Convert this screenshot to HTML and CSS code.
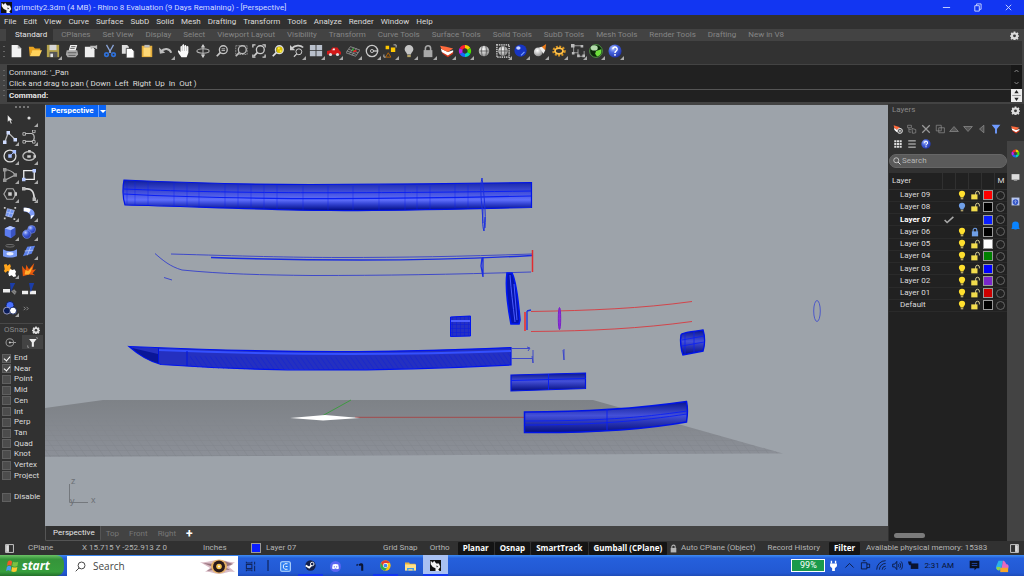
FILE: index.html
```html
<!DOCTYPE html>
<html lang="en">
<head>
	<meta charset="utf-8">
	<title>grimcity2.3dm (4 MB) - Rhino 8 Evaluation</title>
	<link rel="stylesheet" href="styles.css">
</head>
<body>
	<!-- shared icons -->
	<svg class="defs" width="0" height="0" aria-hidden="true">
		<defs>
			<radialGradient id="g-blue" cx=".35" cy=".3" r=".8"><stop offset="0" stop-color="#b9c8ff"/><stop offset=".4" stop-color="#4664e0"/><stop offset="1" stop-color="#1c2c9c"/></radialGradient>
			<radialGradient id="g-white" cx=".4" cy=".35" r=".7"><stop offset="0" stop-color="#fff"/><stop offset="1" stop-color="#8d8d8d"/></radialGradient>
			<symbol id="gear" viewBox="0 0 16 16"><path d="M6.500 1h3l.4 2 1.400.6 1.800-1.200 2 2-1.100 1.800.6 1.400 2 .4v2l-2 .4-.6 1.400 1.100 1.800-2 2-1.800-1.200-1.400.6-.4 1.600h-3l-.4-1.600-1.400-.6-1.800 1.200-2-2 1.100-1.800-.6-1.400-1.600-.4V8l1.600-.4.6-1.400L1.300 4.400l2-2 1.800 1.200L6.100 3z" fill="#dcdcdc"/><circle cx="8" cy="8.600" r="2.600" fill="#3a3a3a"/></symbol>
			<symbol id="bulb" viewBox="0 0 16 16"><path d="M8 1a5 5 0 0 0-5 5c0 2.500 2.500 3.500 2.800 6h4.400c.3-2.500 2.800-3.500 2.800-6a5 5 0 0 0-5-5z"/><path d="M6 12.500h4v2.500H6z" fill="#b5a468"/></symbol>
			<symbol id="unlock" viewBox="0 0 16 16"><path d="M9 8V5a3 3 0 0 1 6 0v2" fill="none" stroke="#d8cf96" stroke-width="1.600"/><rect x="2" y="7" width="10" height="8" fill="#f2dc4c"/></symbol>
			<symbol id="lock" viewBox="0 0 16 16"><path d="M5 8V5a3 3 0 0 1 6 0v3" fill="none" stroke="currentColor" stroke-width="1.800"/><rect x="3" y="7" width="10" height="8" fill="currentColor"/></symbol>
			<symbol id="wheel" viewBox="0 0 16 16"><g fill="none" stroke-width="4"><path d="M8 3a5 5 0 0 1 4.300 2.500" stroke="#f7d000"/><path d="M12.300 5.500a5 5 0 0 1 0 5" stroke="#4be000"/><path d="M12.300 10.500A5 5 0 0 1 8 13" stroke="#00d8c0"/><path d="M8 13a5 5 0 0 1-4.300-2.500" stroke="#1668ff"/><path d="M3.700 10.500a5 5 0 0 1 0-5" stroke="#c020f0"/><path d="M3.700 5.500A5 5 0 0 1 8 3" stroke="#ff2030"/></g></symbol>
			<symbol id="layers" viewBox="0 0 16 16"><path d="M2 8l7 4 6-4v3l-6 4-6-4z" fill="#d0351a"/><path d="M1 5l8 4 6-2v2l-6 4-7-4z" fill="#fff"/><path d="M0 2l7 1 8 2-6 4-7-3z" fill="#ff6a3c"/></symbol>
			<symbol id="help" viewBox="0 0 16 16"><circle cx="8" cy="8" r="7.500" fill="url(#g-blue)"/><path d="M5.500 6a2.500 2.500 0 1 1 3.700 2.200C8.200 8.800 8 9.200 8 10.300M8 11.500v1.800" fill="none" stroke="#fff" stroke-width="1.700"/></symbol>
			<symbol id="lens" viewBox="0 0 16 16"><circle cx="9.500" cy="6.500" r="4.500" fill="none" stroke="currentColor" stroke-width="1.500"/><path d="M6.300 9.700L2 14" stroke="currentColor" stroke-width="2"/></symbol>
			<symbol id="rhino" viewBox="0 0 16 16"><rect width="16" height="16" fill="#111"/><path d="M1 1l3 3 2-3 3 4 4 0 2 5-3 4 2 2H8l0-4-4-2-3-4z" fill="#f4f4f4"/><path d="M9 8l3 1-2 2z" fill="#333"/></symbol>
			<symbol id="pane" viewBox="0 0 16 16"><path d="M1 1h14v14H1z" fill="none" stroke="#ddd" stroke-width="1.500"/></symbol>
		</defs>
	</svg>

	<header class="titlebar">
		<svg class="app-icon"><use href="#rhino"/></svg>
		<span class="title">grimcity2.3dm (4 MB) - Rhino 8 Evaluation (9 Days Remaining) - [Perspective]</span>
		<div class="window-buttons">
			<button aria-label="Minimize"><svg viewBox="0 0 10 10"><path d="M1 5h8"/></svg></button>
			<button aria-label="Restore"><svg viewBox="0 0 10 10"><path d="M2 3h5v6H2zM4 3V1h5v6H7"/></svg></button>
			<button aria-label="Close"><svg viewBox="0 0 10 10"><path d="M2 2l6 6M8 2L2 8"/></svg></button>
		</div>
	</header>

	<nav class="menubar">
		<button>File</button><button>Edit</button><button>View</button><button>Curve</button><button>Surface</button><button>SubD</button><button>Solid</button><button>Mesh</button><button>Drafting</button><button>Transform</button><button>Tools</button><button>Analyze</button><button>Render</button><button>Window</button><button>Help</button>
	</nav>

	<div class="tool-tabs">
		<button class="active">Standard</button><button>CPlanes</button><button>Set View</button><button>Display</button><button>Select</button><button>Viewport Layout</button><button>Visibility</button><button>Transform</button><button>Curve Tools</button><button>Surface Tools</button><button>Solid Tools</button><button>SubD Tools</button><button>Mesh Tools</button><button>Render Tools</button><button>Drafting</button><button>New in V8</button>
		<button class="gear" aria-label="Options"><svg><use href="#gear"/></svg></button>
	</div>

	<div class="toolbar">
		<div class="grip"></div>
		<div class="tools">
			<button aria-label="New"><svg viewBox="0 0 16 16"><path d="M3 1h7l4 4v10H3z" fill="#f2f2f2"/><path d="M10 1v4h4z" fill="#aaa"/></svg></button>
			<button aria-label="Open"><svg viewBox="0 0 16 16"><path d="M1 3h5l2 2h6v3H5l-3 6z" fill="#e9a320"/><path d="M5 7h11l-3 7H2z" fill="#ffd35c"/></svg></button>
			<button class="more" aria-label="Save"><svg viewBox="0 0 16 16"><path d="M1 1h14v14H1z" fill="#b3a24c"/><path d="M4 1h8v6H4z" fill="#d6d6d6"/><path d="M4 9h9v6H4z" fill="#555"/><path d="M5 11h3v4H5z" fill="#e5e5e5"/></svg></button>
			<button aria-label="Print"><svg viewBox="0 0 16 16"><path d="M6 1h8l-2 7H4z" fill="#eee"/><path d="M2 7h12l1 5-3 3H3l-2-3z" fill="#a9a9a9"/><path d="M7 3h5M6 5h5M3 10h10M4 13h8" stroke="#555"/></svg></button>
			<button aria-label="Properties"><svg viewBox="0 0 16 16"><path d="M1 3h9l2 3v9H1z" fill="#eee"/><path d="M7 2h6l2-1v5l-4-2-3 2z" fill="#bbb"/></svg></button>
			<button aria-label="Cut"><svg viewBox="0 0 16 16"><path d="M4 1l5 9M12 1L7 10" stroke="#8ba5d8" stroke-width="1.500"/><g fill="none" stroke="#2e6fd6" stroke-width="2"><circle cx="4" cy="12" r="2"/><circle cx="12" cy="12" r="2"/></g></svg></button>
			<button aria-label="Copy"><svg viewBox="0 0 16 16"><path d="M1 1h6l2 2v8H1z" fill="#ddd"/><path d="M6 5h6l3 3v8H6z" fill="#fff" stroke="#444"/></svg></button>
			<button aria-label="Paste"><svg viewBox="0 0 16 16"><path d="M2 2h12v13H2z" fill="#e4ad3c"/><path d="M4 4h8v10H4z" fill="#ffd977"/><path d="M5 1h6v3H5z" fill="#bbb"/></svg></button>
			<button class="more" aria-label="Undo"><svg viewBox="0 0 16 16"><path d="M2 9c4-5 10-4 12 1" fill="none" stroke="#bdbdbd" stroke-width="2.200"/><path d="M0 4l1 7 6-1z" fill="#bdbdbd"/></svg></button>
			<button aria-label="Pan"><svg viewBox="0 0 16 16"><path d="M5 15C3 12 1 10 1 8l1-1 2 2V3l1-1 1 1V1l2-1v3l1-2h1l1 2 1-1 1 1v7l-2 5z" fill="#fafafa"/><path d="M6 3v5M8.500 3v5M11 3v5" stroke="#999" stroke-width=".6"/></svg></button>
			<button aria-label="Rotate view"><svg viewBox="0 0 16 16"><g fill="none" stroke="#b5b5b5" stroke-width="1.200"><ellipse cx="8" cy="8" rx="7" ry="2.500"/><path d="M8 1v14"/></g><path d="M8 0l2.500 4h-5zM8 16l2.500-4h-5z" fill="#ccc"/></svg></button>
			<button aria-label="Zoom"><svg viewBox="0 0 16 16" color="#c5c5c5"><use href="#lens"/><path d="M7.500 5.500h4M7.500 7.500h4" stroke="#ccc"/></svg></button>
			<button aria-label="Zoom window"><svg viewBox="0 0 16 16" color="#bbb"><path d="M2 2h13v10H2z" fill="none" stroke="#999" stroke-dasharray="2 1"/><use href="#lens"/></svg></button>
			<button aria-label="Zoom extents"><svg viewBox="0 0 16 16" color="#ccc"><use href="#lens"/><path d="M1 4V1h3M12 1h3v3M15 12v3h-3M1 12v3h3" fill="none" stroke="#ccc" stroke-width="1.500"/></svg></button>
			<button aria-label="Zoom selected"><svg viewBox="0 0 16 16" color="#ddd"><circle cx="10" cy="6.500" r="4" fill="#d8c000"/><path d="M8 4h2v2H8zM10 7h2v2h-2z" fill="#fff04a"/><use href="#lens"/></svg></button>
			<button class="more" aria-label="Undo view"><svg viewBox="0 0 16 16" color="#ccc"><g transform="translate(3 4) scale(.75)"><use href="#lens" width="16" height="16"/></g><path d="M2 5c4-4 10-4 13-1" fill="none" stroke="#ccc" stroke-width="2"/><path d="M0 1v6h6z" fill="#ccc"/></svg></button>
			<button class="more" aria-label="Four viewports"><svg viewBox="0 0 16 16"><path d="M1 1h6.500v6H1zM8.500 1H15v6H8.500zM1 8h6.500v6H1zM8.500 8H15v6H8.500z" fill="#b9c0cc"/></svg></button>
			<button class="more" aria-label="Right view"><svg viewBox="0 0 16 16"><path d="M0 8l4-1 2-3h6l2 3 2 2v3H0z" fill="#d31818"/><path d="M6 7l1-2h2v2z" fill="#eee"/><circle cx="4" cy="12" r="1.800" fill="#ddd"/><circle cx="12" cy="12" r="1.800" fill="#ddd"/></svg></button>
			<button class="more" aria-label="CPlane"><svg viewBox="0 0 16 16"><g fill="none" stroke="#999" stroke-width=".9"><path d="M5 3l11 4-5 7-11-4zM9 4L4 11M12 5l-5 8M3 6l11 4M1 8l11 4"/></g><path d="M8 8h4" stroke="#e02020" stroke-width="2"/><path d="M8 8V5" stroke="#20b020" stroke-width="1.500"/></svg></button>
			<button class="more" aria-label="Object snap"><svg viewBox="0 0 16 16"><circle cx="8" cy="8" r="6.500" fill="none" stroke="#c9c9c9" stroke-width="1.500"/><circle cx="8" cy="8" r="1.800" fill="none" stroke="#ccc"/><path d="M9 8h6" stroke="#ccc" stroke-width="1.500"/></svg></button>
			<button class="more" aria-label="Select"><svg viewBox="0 0 16 16"><path d="M3 2h4v4H3zM9 4h5v5H9z" fill="#ffc800"/><path d="M6 10l3 5H3z" fill="none" stroke="#c06a00"/><path d="M12 1h3v3M1 12v3h2" fill="none" stroke="#ccc"/></svg></button>
			<button class="more" aria-label="Hide"><svg viewBox="0 0 16 16" fill="#c4c4c4"><use href="#bulb"/></svg></button>
			<button class="more" aria-label="Lock"><svg viewBox="0 0 16 16" color="#a9a9a9"><use href="#lock"/></svg></button>
			<button class="more" aria-label="Layers"><svg><use href="#layers"/></svg></button>
			<button class="more" aria-label="Object properties"><svg><use href="#wheel"/></svg></button>
			<button aria-label="Shade"><svg viewBox="0 0 16 16"><circle cx="8" cy="8" r="6" fill="url(#g-white)"/><path d="M6 2.500c-1 3-1 8 0 11M3 8h10M10 2.500c1 3 1 8 0 11" fill="none" stroke="#444" stroke-width=".8"/></svg></button>
			<button class="more" aria-label="Render preview"><svg viewBox="0 0 16 16"><path d="M1 1h14v14H1z" fill="none" stroke="#bbb" stroke-width="2" stroke-dasharray="1.500 1"/><circle cx="8" cy="8" r="5.500" fill="url(#g-white)"/><path d="M6 3v10M10 3v10M3 8h10" stroke="#444" stroke-width=".8"/></svg></button>
			<button class="more" aria-label="Render"><svg viewBox="0 0 16 16"><circle cx="7.500" cy="7.500" r="7" fill="#1735c4"/><ellipse cx="5" cy="4.500" rx="2.500" ry="2" fill="#c5d2ff"/><path d="M8 13l4-4" stroke="#79a0ff" stroke-width="1.500"/></svg></button>
			<button class="more" aria-label="Lights"><svg viewBox="0 0 16 16"><circle cx="6" cy="9" r="5" fill="url(#g-white)"/><path d="M9 4l6-4-1 7z" fill="#ef7d1a"/><path d="M7 4l3-1 4 4-2 4z" fill="#eee"/></svg></button>
			<button class="more" aria-label="Options"><svg viewBox="0 0 16 16"><ellipse cx="8" cy="8" rx="6" ry="4.500" fill="none" stroke="#d89522" stroke-width="3.500" stroke-dasharray="2 1.500"/><ellipse cx="8" cy="8" rx="4.500" ry="3.200" fill="none" stroke="#ffc14a" stroke-width="2"/></svg></button>
			<button class="more" aria-label="Dimension"><svg viewBox="0 0 16 16"><path d="M3 2h9M3 2v8h5M8 6v8h7V8" fill="none" stroke="#aaa"/><path d="M0 0h4v4H0zM11 1h3v3h-3zM1 9h3v3H1zM7 12h3v3H7zM13 12h3v3h-3z" fill="#bbb"/></svg></button>
			<button class="more" aria-label="Grasshopper"><svg viewBox="0 0 16 16"><circle cx="8" cy="8" r="7.300" fill="#0c2a0a" stroke="#58a04c"/><ellipse cx="6" cy="4.500" rx="4" ry="3" fill="#b5dcae"/><path d="M8 8l6-2c1 5-2 8-5 8l-2-3z" fill="#6fe03c"/></svg></button>
			<button class="more" aria-label="Help"><svg><use href="#help"/></svg></button>
		</div>
	</div>

	<div class="command">
		<div class="grip"></div>
		<div class="command-text">
			<div class="history">
				<p>Successfully read file "C:\Users\Pistol\Downloads\grimcity2.3dm"</p>
				<p>Command: '_Pan</p>
				<p>Click and drag to pan ( Down&nbsp; Left&nbsp; Right&nbsp; Up&nbsp; In&nbsp; Out )</p>
			</div>
			<div class="prompt">
				<label for="command">Command:</label>
				<input type="text" id="command">
			</div>
		</div>
		<div class="command-scroll">
			<div class="scroll-arrows"><svg viewBox="0 0 10 24"><path d="M3 7l2-2 2 2M3 17l2 2 2-2"/></svg></div>
			<div class="spinner"><svg viewBox="0 0 10 12"><path d="M5 1l2 3H3zM5 11l2-3H3z"/><path class="split" d="M1 6h8"/></svg></div>
		</div>
	</div>

	<main class="workspace">
		<aside class="left">
			<div class="left-grip"></div>
			<div class="palette">
				<button aria-label="Select"><svg viewBox="0 0 16 16"><path d="M5 4v9l2-2 2 4 1.500-1-1.500-3h2.500z" fill="#eee" stroke="#111" stroke-width=".6"/></svg></button>
				<button class="more" aria-label="Point"><svg viewBox="0 0 16 16"><circle cx="8" cy="8" r="1.800" fill="#ddd"/></svg></button>
				<button class="more" aria-label="Polyline"><svg viewBox="0 0 16 16"><path d="M2 14L6 3l9 9" fill="none" stroke="#bbb" stroke-width="1.500"/><path d="M0 12h4v4H0zM4 1h4v4H4zM12 9h4v4h-4z" fill="#cfdcff"/></svg></button>
				<button class="more" aria-label="Curve"><svg viewBox="0 0 16 16"><path d="M2 4h9c4 1 4 8 0 9H2" fill="none" stroke="#bbb" stroke-width="1.300"/><g fill="#333" stroke="#bbb"><path d="M1 3h3v3H1zM12 0h3v3h-3zM1 12h3v3H1zM12 12h3v3h-3z"/></g></svg></button>
				<button class="more" aria-label="Circle"><svg viewBox="0 0 16 16"><circle cx="8" cy="8" r="6.800" fill="none" stroke="#ddd" stroke-width="1.500"/><path d="M7 9l6-6" stroke="#9bb4ff"/><path d="M6 6h4v4H6zM11 1h4v4h-4z" fill="#a9c0ff"/></svg></button>
				<button class="more" aria-label="Ellipse"><svg viewBox="0 0 16 16"><ellipse cx="8" cy="8" rx="7" ry="5" fill="none" stroke="#bbb" stroke-width="1.500"/><path d="M6 7h4v3H6zM7 1h3v3H7zM13 7h3v3h-3z" fill="#ccc"/></svg></button>
				<button class="more" aria-label="Arc"><svg viewBox="0 0 16 16"><path d="M2 2c6 0 10 3 12 6L2 14z" fill="none" stroke="#aaa" stroke-width="1.300"/><path d="M0 0h4v4H0zM12 6h4v4h-4zM0 12h4v4H0z" fill="#999"/></svg></button>
				<button class="more" aria-label="Rectangle"><svg viewBox="0 0 16 16"><path d="M2 3h12v10H2z" fill="none" stroke="#eee" stroke-width="1.500"/><path d="M0 11h4v4H0zM12 1h4v4h-4z" fill="#b6c9ff"/></svg></button>
				<button class="more" aria-label="Polygon"><svg viewBox="0 0 16 16"><path d="M4.500 2h7L15 8l-3.500 6h-7L1 8z" fill="none" stroke="#aaa" stroke-width="1.300"/><path d="M6 6h4v4H6zM13 6h3v4h-3z" fill="#ccc"/></svg></button>
				<button class="more" aria-label="Fillet"><svg viewBox="0 0 16 16"><path d="M1 2h5c6 0 8 4 8 13" fill="none" stroke="#ddd" stroke-width="2"/><path d="M0 0h4v4H0zM12 12h4v4h-4z" fill="#bbb"/></svg></button>
				<button class="more" aria-label="Surface"><svg viewBox="0 0 16 16"><path d="M5 3l8 2-3 8-7-2z" fill="#6f93f0"/><path d="M5 3l8 2-3 8-7-2zM9 4L6 12M4 7l8 2" stroke="#c8d5ff" stroke-width=".7" fill="none"/><path d="M1 1h2v2H1zM13 1h2v2h-2zM1 13h2v2H1zM12 14h2v2h-2z" fill="#ccc"/></svg></button>
				<button class="more" aria-label="Revolve"><svg viewBox="0 0 16 16"><path d="M2 2c9-1 14 4 12 9l-4 4c1-5-2-8-8-9z" fill="#7f9cf8"/><path d="M2 2c3 0 6 0 8 2L8 8C6 6 4 6 2 6zM10 11l4-1-4 5z" fill="#fff"/></svg></button>
				<button class="more" aria-label="Box"><svg viewBox="0 0 16 16"><path d="M2 4l6-3 6 2v8l-5 4-7-3z" fill="#5c7cf0"/><path d="M2 4l6-3 6 2-5 3z" fill="#b3c5ff"/><path d="M9 6l5-3v8l-5 4z" fill="#3a54c4"/></svg></button>
				<button class="more" aria-label="Sphere"><svg viewBox="0 0 16 16"><circle cx="11" cy="5" r="4.500" fill="url(#g-blue)" stroke="#8fa8f8" stroke-width=".6"/><circle cx="5.500" cy="10.500" r="4.800" fill="url(#g-blue)" stroke="#8fa8f8" stroke-width=".6"/></svg></button>
				<button aria-label="Loft"><svg viewBox="0 0 16 16"><ellipse cx="8" cy="2" rx="5" ry="1.500" fill="none" stroke="#777"/><path d="M0 6c4 3 12 3 16 0v8c-4 2-12 2-16 0z" fill="#7799f5"/><ellipse cx="8" cy="11" rx="4" ry="2" fill="#e8edff"/></svg></button>
				<button class="more" aria-label="Mesh"><svg viewBox="0 0 16 16"><path d="M6 3l9-1-4 9-10 3z" fill="#5f83ea"/><path d="M10 3L6 13M3 8l10-1" stroke="#c6d3ff" stroke-width=".8"/></svg></button>
				<button class="more" aria-label="Join"><svg viewBox="0 0 16 16"><path d="M1 2l3-1 1 2 3-2 1 3-1 2 2 1-3 3-2-1-2 2-2-2 1-2z" fill="#ffa51e"/><path d="M8 7l3 1 2-1 2 3-1 2 1 3-3 1-2-2-3 1-1-3z" fill="#fff"/></svg></button>
				<button aria-label="Explode"><svg viewBox="0 0 16 16"><path d="M0 3l4 5 1-6 3 5 6-7-2 8 4-1-4 5 3 2-7-1-7 2z" fill="#e8590c"/><path d="M3 13l1-5 3 1 5-5-2 6-2 3z" fill="#ffb02e"/></svg></button>
				<button aria-label="Trim"><svg viewBox="0 0 16 16"><path d="M0 8h8v4H0z" fill="#eee"/><path d="M8 1h6l-5 10z" fill="#1b3da8"/><path d="M10 10l4 4M12 9l3 3" stroke="#888" stroke-width="2"/></svg></button>
				<button aria-label="Split"><svg viewBox="0 0 16 16"><path d="M0 10h7v4H0zM9 10h7v4H9z" fill="#eee"/><path d="M8 1h6l-4 11z" fill="#1b3da8"/></svg></button>
				<button class="more" aria-label="Boolean"><svg viewBox="0 0 16 16"><circle cx="8" cy="5" r="4.500" fill="#4a70ff" stroke="#0b1d5a"/><circle cx="4.500" cy="11" r="4" fill="#0b1d5a" stroke="#aac"/><circle cx="11.500" cy="11" r="4" fill="#fff" stroke="#0b1d5a"/></svg></button>
				<button class="expand" aria-label="More"><svg viewBox="0 0 16 16"><path d="M3 5l3 3-3 3M8 5l3 3-3 3" fill="none" stroke="#999" stroke-width="1.500"/></svg></button>
			</div>

			<section class="osnap">
				<h2>OSnap <svg><use href="#gear"/></svg></h2>
				<div class="osnap-tabs">
					<button aria-label="Snaps"><svg viewBox="0 0 16 16"><circle cx="7" cy="8" r="5.500" fill="none" stroke="#999" stroke-width="1.500"/><path d="M7 8h9" stroke="#999" stroke-width="1.500"/><circle cx="7" cy="8" r="1.500" fill="#ccc"/></svg></button>
					<button class="other" aria-label="Filter"><svg viewBox="0 0 16 16"><path d="M3 3h11l-4 5v6H7V8z" fill="#eee"/><path d="M1 12v3h2M13 1h2v2" fill="none" stroke="#aaa"/></svg></button>
				</div>
				<div class="snaps">
					<label><input type="checkbox" checked>End</label>
					<label><input type="checkbox" checked>Near</label>
					<label><input type="checkbox">Point</label>
					<label><input type="checkbox">Mid</label>
					<label><input type="checkbox">Cen</label>
					<label><input type="checkbox">Int</label>
					<label><input type="checkbox">Perp</label>
					<label><input type="checkbox">Tan</label>
					<label><input type="checkbox">Quad</label>
					<label><input type="checkbox">Knot</label>
					<label><input type="checkbox">Vertex</label>
					<label><input type="checkbox">Project</label>
				</div>
				<label class="disable"><input type="checkbox">Disable</label>
			</section>
		</aside>

		<section class="center">
			<div class="viewport">
				<svg class="scene" viewBox="45 105 843 421" preserveAspectRatio="xMidYMid slice">
					<defs>
						<linearGradient id="tube" x2="0" y2="1"><stop offset="0" stop-color="#0f1f9c"/><stop offset=".3" stop-color="#3643cc"/><stop offset=".65" stop-color="#5f6efa"/><stop offset=".78" stop-color="#3444d4"/><stop offset="1" stop-color="#000c80"/></linearGradient>
						<linearGradient id="handle" x2="0" y2="1"><stop offset="0" stop-color="#0a168c"/><stop offset=".45" stop-color="#4450d8"/><stop offset="1" stop-color="#050f80"/></linearGradient>
						<linearGradient id="ground" x2="0" y2="1"><stop offset="0" stop-color="#7e8287"/><stop offset="1" stop-color="#8c9098"/></linearGradient>
						<linearGradient id="near" x2="0" y2="1"><stop offset=".3" stop-color="#000"/><stop offset="1" stop-color="#fff"/></linearGradient>
						<mask id="fade"><rect x="45" y="400" width="740" height="58" fill="url(#near)"/></mask>
						<pattern id="grid" width="9" height="5" patternUnits="userSpaceOnUse" patternTransform="skewX(35)"><path d="M0 0h9M0 0v5" stroke="#73777d" fill="none" stroke-width=".8"/></pattern>
						<pattern id="hatch" width="5" height="5" patternUnits="userSpaceOnUse" patternTransform="skewX(35)"><path d="M0 0v5" stroke="#0014e8" stroke-width="1.200"/></pattern>
						<pattern id="mesh" width="4" height="4" patternUnits="userSpaceOnUse"><path d="M0 0h4M0 0v4" stroke="#0014e8" fill="none"/></pattern>
					</defs>

					<!-- construction plane -->
					<path d="M45 408L103 400H593L783 453.500 45 457z" fill="url(#ground)"/>
					<path d="M45 408L103 400H593L783 453.500 45 457z" fill="url(#grid)" mask="url(#fade)" opacity=".6"/>
					<path d="M323 415.500L351 400" stroke="#3f9a42" fill="none"/>
					<path d="M355 417.300H525" stroke="#a34a4c" fill="none"/>
					<path d="M290 418l35-3 35 3-37 2.500z" fill="#fff"/>

					<!-- scabbard -->
					<path d="M124 180C190 183 250 184.500 310 184.500S470 183.500 531.500 182.500V207.500C460 209 390 211 330 210.500S190 206.500 125 205C122.500 198 122.500 187 124 180z" fill="url(#tube)" stroke="#0014e8" stroke-width="1.200"/>
					<g fill="none" stroke="#0a20f4">
						<path d="M124 189C220 193 330 194 531 191"/>
						<path d="M124 194C220 199 360 200 531 196" stroke-width="1.200"/>
						<path d="M127 181v24M135 182v23M148 182v23M174 183v24M187 183v24M199 184v24M225 184v24M238 184v24M251 185v24M264 185v24M277 185v24M303 186v24M328 186v24M353 186v24M379 186v24M405 186v24M417 186v24M430 186v23M455 185v23M468 185v23" stroke-width=".7" opacity=".6"/>
						<path d="M482 178c-2 8-1 20 0 30l1 15M482 178c2 15 4 36 3 50M483 208c0 10-1 18 1 23l1-14" stroke="#1c30e0"/>
					</g>

					<!-- blade profile -->
					<g fill="none" stroke="#3440cc" stroke-width=".9">
						<path d="M155 253.500c8 7 15 13 27 16.500 40 4 80 5 130 5.500 70 0 140-1 219-3.500"/>
						<path d="M171 254c70 2 120 3.500 170 3.500 60 0 120-1 191-3.500"/>
						<path d="M211 257.500c60 2 100 2.500 150 2.500s110-1 171-4.500" stroke="#1c2ee0" stroke-width="1.300"/>
						<path d="M164 277.500l8 2.500"/>
						<path d="M482 258l-1 8 2 11V257" stroke="#1c2ee0" stroke-width="1.300"/>
					</g>
					<path d="M532.500 250v22" stroke="#e02c30" stroke-width="1.500"/>

					<!-- guard, collar -->
					<path d="M507 273h5c4 8 6 24 8 47l-1 4h-8c-3-16-6-36-4-51z" fill="#0714b0" stroke="#0018f4" stroke-width="1.600"/>
					<path d="M510 275c1 15 3 30 5 47M514 284l3 36" stroke="#4a5cff" fill="none"/>
					<path d="M450.500 317l20-1V336l-20 .5z" fill="#2430c4" stroke="#0014f0"/>
					<path d="M450.500 317l20-1V336l-20 .5z" fill="url(#mesh)" opacity=".7"/>
					<path d="M451 321h19" stroke="#4e60ff" stroke-width="2"/>

					<!-- handle profile -->
					<g fill="none" stroke="#d83a40">
						<path d="M531 311.500c60-1 110-3 161-10M531 331.500c60-.5 110-3 161-10" stroke-width=".9"/>
						<path d="M525 312v19" stroke="#f03030" stroke-width="1.600"/>
					</g>
					<path d="M527 311v19M527 311l4-1" stroke="#1c30e0" stroke-width="1.300" fill="none"/>
					<ellipse cx="559.500" cy="318.500" rx="1.200" ry="11" fill="#8a30d8" stroke="#7a20c8"/>
					<ellipse cx="817" cy="311" rx="3.300" ry="10.500" fill="none" stroke="#4450cc" stroke-width=".9"/>

					<!-- blade -->
					<path d="M129 346.500c90 4 160 5 210 5s110-1.500 172-4v17.500c-70 3.500-130 5-190 5s-110-2-160-5.500c-14-4-24-11-32-18z" fill="#2430c0" stroke="#0014f0" stroke-width="1.200"/>
					<path d="M190 356c80 2 200 1 321-3v12c-80 3-240 8-321 2z" fill="url(#hatch)" opacity=".55"/>
					<path d="M158 350c100 4 220 6 353 1" stroke="#3450ff" stroke-width="2" fill="none"/>
					<path d="M132 348c8 7 16 12 26 15v-9z" fill="#0a1698"/>
					<path d="M158.500 348v16M187 351v15" stroke="#0014e0" fill="none"/>
					<path d="M511 348.500h18M511 358.500h21M527 347l3 1-2 3M533 350v13l-1-7M564 349v11l-1-10" fill="none" stroke="#3440cc" stroke-width=".9"/>

					<!-- collars and handle -->
					<path d="M681 335c0-2 8-3 22-5 2 6 2 15 0 21l-20 4c-2-5-3-14-2-20z" fill="url(#handle)" stroke="#0014e8" stroke-width="1.500"/>
					<path d="M685 334v20M694 332v20M682 340l22-4M682 346l22-4" stroke="#0a20f4" fill="none" stroke-width=".8"/>
					<path d="M511 375l74.500-2v15.500L511 391z" fill="url(#handle)" stroke="#0014e8" stroke-width="1.200"/>
					<path d="M511 380.500l75-2M548.500 374v16" stroke="#0a20f4" fill="none"/>
					<path d="M524.500 412c60 0 110-3 162-10.500 1.500 7 1 14 0 20.500-50 9-105 11-162 10.500z" fill="url(#handle)" stroke="#0014e8" stroke-width="1.500"/>
					<path d="M525 421c70 0 115-3 162-10M525 425c70 0 115-4 162-11M607 409v21" stroke="#0a20f4" fill="none" stroke-width=".9"/>

					<!-- axis marker -->
					<path d="M69.500 484v18.500H88" stroke="#74787d" fill="none"/>
					<text class="axis" x="71" y="484">z</text>
					<text class="axis" x="70" y="504">y</text>
					<text class="axis" x="91" y="503">x</text>
				</svg>
				<div class="view-label"><button>Perspective</button><button class="drop" aria-label="Viewport menu"></button></div>
			</div>
			<div class="view-tabs">
				<button class="active">Perspective</button><button>Top</button><button>Front</button><button>Right</button><button class="add" aria-label="New viewport">+</button>
			</div>
		</section>

		<aside class="right">
			<div class="layers-panel">
				<h2>Layers</h2>
				<div class="layer-tools">
					<button aria-label="New layer"><svg viewBox="0 0 16 16"><path d="M1 2l10 3-4 5-5-4z" fill="#ff6a3c"/><path d="M2 6l5 4-1 3-4-4z" fill="#fff"/><circle cx="11" cy="11" r="4" fill="#444" stroke="#eee" stroke-width="1.500"/><path d="M9 11h4M11 9v4" stroke="#fff"/></svg></button>
					<button aria-label="New sublayer"><svg class="line" viewBox="0 0 16 16"><path d="M1 2h6v4H1zM3 6v7h4M3 9h4M8 7l6 2v5l-5 1z"/></svg></button>
					<button aria-label="Delete layer"><svg class="line" viewBox="0 0 16 16"><path d="M2 2l12 12M14 2L2 14" stroke-width="2"/></svg></button>
					<button aria-label="Duplicate layer"><svg class="line" viewBox="0 0 16 16"><path d="M2 2h8v9H2zM6 6h9v8H6z"/></svg></button>
					<button aria-label="Move up"><svg class="line" viewBox="0 0 16 16"><path d="M1 12l7-8 7 8z" fill="#555"/></svg></button>
					<button aria-label="Move down"><svg class="line" viewBox="0 0 16 16"><path d="M1 4l7 8 7-8z" fill="#555"/></svg></button>
					<button aria-label="Move out"><svg class="line" viewBox="0 0 16 16"><path d="M11 2L4 8l7 6z" fill="#555"/></svg></button>
					<button aria-label="Filter"><svg viewBox="0 0 16 16"><path d="M1 1h14L9.500 8v7h-3V8z" fill="#6f9bff"/></svg></button>
					<button aria-label="Columns"><svg viewBox="0 0 16 16"><path d="M2 3.500h12M2 8h12M2 12.500h12" stroke="#ddd" stroke-width="3.300" stroke-dasharray="3.300 1"/></svg></button>
					<button aria-label="List"><svg viewBox="0 0 16 16"><path d="M2 3h12M2 8h12M2 13h12" stroke="#ddd" stroke-width="1.500"/></svg></button>
					<button aria-label="Help"><svg><use href="#help"/></svg></button>
				</div>
				<label class="search"><svg viewBox="0 0 16 16"><circle cx="6.500" cy="6.500" r="5" fill="none" stroke="#ddd" stroke-width="1.500"/><path d="M10 10l5 5" stroke="#ddd" stroke-width="2"/></svg><input type="text" placeholder="Search" aria-label="Search layers"></label>
				<table>
					<thead>
						<tr><th class="name">Layer</th><th></th><th></th><th></th><th></th><th class="mat">M</th></tr>
					</thead>
					<tbody>
						<tr><td>Layer 09</td><td></td><td><svg class="on"><use href="#bulb"/></svg></td><td><svg><use href="#unlock"/></svg></td><td><i class="swatch red"></i></td><td><i class="ring"></i></td></tr>
						<tr><td>Layer 08</td><td></td><td><svg class="off"><use href="#bulb"/></svg></td><td><svg><use href="#unlock"/></svg></td><td><i class="swatch black"></i></td><td><i class="ring"></i></td></tr>
						<tr class="current"><td>Layer 07</td><td><svg viewBox="0 0 16 16"><path d="M1 8l4 4L15 3" fill="none" stroke="#aaa" stroke-width="2.500"/></svg></td><td></td><td></td><td><i class="swatch bright"></i></td><td><i class="ring"></i></td></tr>
						<tr><td>Layer 06</td><td></td><td><svg class="on"><use href="#bulb"/></svg></td><td><svg class="locked"><use href="#lock"/></svg></td><td><i class="swatch black"></i></td><td><i class="ring"></i></td></tr>
						<tr><td>Layer 05</td><td></td><td><svg class="on"><use href="#bulb"/></svg></td><td><svg><use href="#unlock"/></svg></td><td><i class="swatch white"></i></td><td><i class="ring"></i></td></tr>
						<tr><td>Layer 04</td><td></td><td><svg class="on"><use href="#bulb"/></svg></td><td><svg><use href="#unlock"/></svg></td><td><i class="swatch green"></i></td><td><i class="ring"></i></td></tr>
						<tr><td>Layer 03</td><td></td><td><svg class="on"><use href="#bulb"/></svg></td><td><svg><use href="#unlock"/></svg></td><td><i class="swatch blue"></i></td><td><i class="ring"></i></td></tr>
						<tr><td>Layer 02</td><td></td><td><svg class="on"><use href="#bulb"/></svg></td><td><svg><use href="#unlock"/></svg></td><td><i class="swatch purple"></i></td><td><i class="ring"></i></td></tr>
						<tr><td>Layer 01</td><td></td><td><svg class="on"><use href="#bulb"/></svg></td><td><svg><use href="#unlock"/></svg></td><td><i class="swatch darkred"></i></td><td><i class="ring"></i></td></tr>
						<tr><td>Default</td><td></td><td><svg class="on"><use href="#bulb"/></svg></td><td><svg><use href="#unlock"/></svg></td><td><i class="swatch black"></i></td><td><i class="ring"></i></td></tr>
					</tbody>
				</table>
				<div class="hscroll"><div class="thumb"></div></div>
			</div>
			<div class="side-tabs">
				<button class="panel-gear" aria-label="Panel options"><svg><use href="#gear"/></svg></button>
				<button class="active" aria-label="Layers"><svg><use href="#layers"/></svg></button>
				<button aria-label="Properties"><svg><use href="#wheel"/></svg></button>
				<button aria-label="Display"><svg viewBox="0 0 16 16"><path d="M1 2h14v10H1z" fill="#ddd"/><path d="M5 12h6v2H5z" fill="#999"/></svg></button>
				<button aria-label="Help"><svg viewBox="0 0 16 16"><path d="M1 1h14v14H1z" fill="#b9c8ef"/><circle cx="8" cy="9" r="5" fill="#3557c8"/><path d="M6.500 8c1-3 4 0 1.500 1.500v2" fill="none" stroke="#fff"/></svg></button>
				<button aria-label="Notifications"><svg viewBox="0 0 16 16"><path d="M2 13V7a6 6 0 0 1 12 0v6z" fill="#0a84ff"/><path d="M1 12h14v2H1zM6 14h4v1H6z" fill="#0a84ff"/></svg></button>
			</div>
		</aside>
	</main>

	<footer class="statusbar">
		<button class="toggle" aria-label="Left panels"><svg viewBox="0 0 16 16"><use href="#pane"/><path d="M2 2h5v12H2z" fill="#ddd"/></svg></button>
		<span class="cplane">CPlane</span>
		<span class="coords">X 15.715 Y -252.913 Z 0</span>
		<span class="units">Inches</span>
		<span class="layer"><i class="layer-color"></i>Layer 07</span>
		<button>Grid Snap</button>
		<button class="ortho">Ortho</button>
		<button class="on">Planar</button>
		<button class="on">Osnap</button>
		<button class="on">SmartTrack</button>
		<button class="on">Gumball (CPlane)</button>
		<svg class="auto-lock"><use href="#lock"/></svg>
		<button>Auto CPlane (Object)</button>
		<button class="record">Record History</button>
		<button class="on">Filter</button>
		<span class="memory">Available physical memory: 15383</span>
		<button class="toggle right-toggle" aria-label="Right panels"><svg viewBox="0 0 16 16"><use href="#pane"/><path d="M9 2h5v12H9z" fill="#ddd"/></svg></button>
	</footer>

	<div class="taskbar">
		<button class="start"><svg viewBox="0 0 16 16"><path d="M2 3c2-2 4-1 5 0L6 8C5 7 3 6 1 8z" fill="#f05a28"/><path d="M8 3c2 1 4 1 6 0l-1 5c-2 1-4 1-6 0z" fill="#7ac142"/><path d="M1 9c2-2 4-1 5 0l-1 5c-1-1-3-2-5 0z" fill="#4a9cf5"/><path d="M7 9c2 1 4 1 6 0l-1 5c-2 1-4 1-6 0z" fill="#fdc82f"/></svg>start</button>
		<label class="task-search">
			<svg viewBox="0 0 16 16"><circle cx="9.500" cy="6.500" r="5" fill="none" stroke="#333" stroke-width="1.300"/><path d="M6 10l-5 5" stroke="#333" stroke-width="1.300"/></svg>
			<input type="text" placeholder="Search" aria-label="Search the computer">
			<svg class="eye" viewBox="0 0 38 18"><path d="M0 5c8 1 12-2 19-2s10 3 16 2l-6 5 6 5c-8-1-10 2-16 2s-9-3-14-2l5-4z" fill="#d9bcc6"/><path d="M3 6l11 1 10-3 9 3-8 3 5 3-11-1-12 2 6-4z" fill="#96727c"/><ellipse cx="19" cy="9.500" rx="8" ry="7" fill="#e7b266"/><circle cx="19" cy="9.500" r="6" fill="#291a1c"/><circle cx="19" cy="9.500" r="2.800" fill="#f8c44e"/><circle cx="19" cy="9.500" r="1" fill="#fff"/></svg>
		</label>
		<div class="apps">
			<button aria-label="Task view"><svg viewBox="0 0 16 16"><path d="M2 1v2h8V1M2 15v-2h8v2M2 5h8v6H2zM14 1v4M14 7v8" fill="none" stroke="#10255c" stroke-width="1.500"/></svg></button>
			<i class="divider"></i>
			<button aria-label="Cricut"><svg viewBox="0 0 16 16"><rect x="1" y="1" width="14" height="14" rx="2" fill="#2c7cf0" stroke="#bfe0ff" stroke-width="1.500"/><path d="M11 4H7L5 6v4l2 2h4M11 8H8" fill="none" stroke="#fff" stroke-width="1.300"/></svg></button>
			<button class="open" aria-label="Steam"><svg viewBox="0 0 16 16"><circle cx="8" cy="8" r="7.500" fill="#12204c"/><path d="M1 8l5 3 4-4" stroke="#fff" stroke-width="2.500" fill="none"/><circle cx="10.500" cy="5.800" r="2.600" fill="#12204c" stroke="#fff" stroke-width="1.300"/></svg></button>
			<button aria-label="Discord"><svg viewBox="0 0 16 16"><circle cx="8" cy="8" r="8" fill="#5865f2"/><path d="M4 5c2-1 6-1 8 0l1 6-3 1-1-1H7l-1 1-3-1z" fill="#fff"/><circle cx="6.300" cy="8.500" r="1" fill="#5865f2"/><circle cx="9.700" cy="8.500" r="1" fill="#5865f2"/></svg></button>
			<button aria-label="Notebook"><svg viewBox="0 0 16 16"><path d="M2 5l2-1v3H2zM5 5c4-3 7-2 7 1v8H9V7H6z" fill="#0b1533"/></svg></button>
			<button class="open" aria-label="Chrome"><svg viewBox="0 0 16 16"><circle cx="8" cy="8" r="7.500" fill="#fbc116"/><path d="M1.500 4.300A7.500 7.500 0 0 1 14.500 4.300H8L4.700 9.800z" fill="#e33b2e"/><path d="M1.500 4.300A7.500 7.500 0 0 0 7.300 15.500l4-6H4.700z" fill="#2da94f"/><circle cx="8" cy="8" r="3.600" fill="#fff"/><circle cx="8" cy="8" r="2.700" fill="#4285f4"/></svg></button>
			<button aria-label="Explorer"><svg viewBox="0 0 16 16"><path d="M0 2h6l1 2h8v3H0z" fill="#e9b13a"/><path d="M0 5h16v9H0z" fill="#ffe08a"/><path d="M3 14v-4h10v4h-2v-2H5v2z" fill="#3e9be8"/></svg></button>
			<button class="active" aria-label="Rhino"><svg><use href="#rhino"/></svg></button>
		</div>
		<div class="tray">
			<span class="charge">99%</span>
			<svg viewBox="0 0 16 16"><path d="M5 1v4M11 1v4" stroke="#fff" stroke-width="2"/><path d="M3 5h10v4l-3 3v4H6v-4L3 9z" fill="#fff"/></svg>
			<svg class="ink" viewBox="0 0 16 16"><path d="M2 11l6-6 6 6"/></svg>
			<svg class="ink" viewBox="0 0 16 16"><path d="M2 4h8v9H2zM10 6h4v5h-4M4 1h4"/></svg>
			<svg class="ink" viewBox="0 0 16 16"><path d="M1 14A13 13 0 0 1 14 1M5 14a9 9 0 0 1 9-9M9 14a5 5 0 0 1 5-5M12 14l2-2"/></svg>
			<svg class="ink" viewBox="0 0 16 16"><path d="M1 6h3l3-4v12l-3-4H1zM9 6c1 1 1 3 0 4M11 4c2 2 2 6 0 8M13 2c3 3 3 9 0 12"/></svg>
			<svg viewBox="0 0 16 16"><path d="M4 5h11v8H4z" fill="#0a1330"/><path d="M0 2h5v4l-2 2-2-2z" fill="#0a1330"/></svg>
			<time>2:31 AM</time>
			<svg class="note" viewBox="0 0 16 16"><path d="M1 1h14v11h-4l-3 3v-3H1z" fill="#0a1020"/><path d="M4 5h8M4 8h8" stroke="#2a5fd8"/></svg>
			<svg class="copilot" viewBox="0 0 16 16"><path d="M4 2h5L7 12c-3 2-6 0-6-3z" fill="#2bb0ea"/><path d="M9 2c3 0 3 3 4 4 3 0 3 3 2 5l-3 3H7z" fill="#e56ac0"/><path d="M2 9h4l-1 4c-2 0-4-1-3-4z" fill="#8fd14a"/><path d="M6 10h9v5H6z" fill="#f7a62b"/></svg>
		</div>
	</div>
</body>
</html>
```
FILE: styles.css
```css
* {
	box-sizing: border-box;
}
body {
	margin: 0;
	min-height: 100vh;
	display: flex;
	flex-direction: column;
	background-color: #434343;
	color: #dcdcdc;
	font-family: Roboto, "Noto Sans", sans-serif;
	font-size: 8px;
	line-height: 10px;
	overflow: hidden;
}
button, input {
	font: inherit;
	color: inherit;
	background: none;
	border: 0;
	padding: 0;
	margin: 0;
}
input {
	min-width: 0;
	outline: 0;
}
svg {
	display: block;
	width: 14px;
	height: 14px;
	flex: none;
}
h2, p {
	margin: 0;
	font-size: 8px;
	font-weight: normal;
}
.defs {
	position: absolute;
	width: 0;
	height: 0;
}

/* title and menus */
.titlebar {
	display: flex;
	align-items: center;
	height: 15px;
	padding-left: 1px;
	background-color: #1236f2;
}
.app-icon {
	width: 11px;
	height: 11px;
	margin-right: 2px;
}
.title {
	color: #d2dcff;
	white-space: nowrap;
}
.window-buttons {
	display: flex;
	margin-left: auto;
}
.window-buttons button {
	width: 31px;
	display: flex;
	justify-content: center;
}
.window-buttons svg {
	width: 9px;
	height: 9px;
	fill: none;
	stroke: #d2dcff;
}
.menubar {
	display: flex;
	gap: 7px;
	height: 14px;
	padding-left: 4px;
	background-color: #313131;
}
.tool-tabs {
	display: flex;
	gap: 12px;
	height: 12px;
	padding-left: 6px;
	color: #858585;
}
.tool-tabs button {
	white-space: nowrap;
}
.tool-tabs .active {
	padding: 0 6px 0 9px;
	margin-right: -4px;
	background-color: #323232;
	color: #e6e6e6;
}
.tool-tabs .gear {
	margin: 0 5px 0 auto;
}
.gear svg {
	width: 9px;
	height: 9px;
}

/* toolbars */
.toolbar {
	display: flex;
	align-items: center;
	height: 23px;
	margin-right: 2px;
	padding-bottom: 3px;
	background-color: #323232;
}
.grip {
	width: 7px;
	align-self: stretch;
	margin: 3px 0;
	background: radial-gradient(circle, #666 1px, transparent 1px) 2px 0 / 4px 5px repeat-y;
}
.tools {
	display: flex;
	justify-content: space-between;
	width: 617px;
}
.tools button, .palette button {
	position: relative;
	display: flex;
	justify-content: center;
	align-items: center;
	width: 18px;
	height: 18px;
}
.more::after {
	content: "";
	position: absolute;
	right: 0;
	bottom: 0;
	border: 2px solid #aaa;
	border-top-color: transparent;
	border-left-color: transparent;
}

/* command line */
.command {
	display: flex;
	height: 40px;
	padding: 1px 2px 2px 0;
}
.command-text {
	flex: 1;
	background-color: #212121;
}
.history {
	display: flex;
	flex-direction: column;
	justify-content: flex-end;
	height: 25px;
	padding-left: 2px;
	line-height: 11px;
	overflow: hidden;
	white-space: nowrap;
	border-bottom: 1px solid #555;
}
.history p {
	flex: none;
}
.prompt {
	display: flex;
	gap: 2px;
	height: 12px;
	padding-left: 2px;
	line-height: 12px;
}
.prompt label {
	font-weight: bold;
	color: #e6e6e6;
}
.prompt input {
	flex: 1;
}
.command-scroll {
	width: 11px;
	background-color: #181818;
}
.scroll-arrows svg {
	width: 11px;
	height: 24px;
	fill: none;
	stroke: #888;
}
.spinner svg {
	width: 11px;
	height: 13px;
	background-color: #ececec;
	fill: #222;
}
.spinner .split {
	stroke: #999;
}

.workspace {
	flex: 1;
	display: flex;
}

/* left column */
.left {
	width: 45px;
	padding-right: 2px;
	background-color: #313131;
}
.left-grip {
	height: 5px;
	margin: 0 14px;
	background: radial-gradient(circle, #777 1px, transparent 1px) 0 1px / 4px 4px repeat-x;
}
.palette {
	display: grid;
	grid-template-columns: 18px 18px;
	column-gap: 1px;
	row-gap: 1px;
	padding-left: 1px;
}
.palette .expand {
	justify-content: flex-start;
	padding-left: 2px;
}
.palette .expand svg {
	width: 9px;
	height: 9px;
}
.osnap h2 {
	display: flex;
	align-items: center;
	justify-content: space-between;
	height: 12px;
	margin-top: 6px;
	padding: 0 3px 0 4px;
	color: #888;
	border-top: 1px solid #484848;
}
.osnap h2 svg {
	width: 8px;
	height: 8px;
}
.osnap-tabs {
	display: flex;
	height: 14px;
	margin-bottom: 4px;
}
.osnap-tabs button {
	flex: 1;
	display: flex;
	align-items: center;
	justify-content: center;
}
.osnap-tabs svg {
	width: 11px;
	height: 11px;
}
.osnap-tabs .other {
	background-color: #434343;
}
.snaps {
	display: flex;
	flex-direction: column;
	justify-content: space-between;
	height: 128px;
}
.osnap label {
	display: flex;
	align-items: center;
	gap: 3px;
	height: 10px;
	padding-left: 2px;
}
.osnap .disable {
	margin-top: 11px;
}
.osnap input {
	appearance: none;
	width: 9px;
	height: 9px;
	flex: none;
	background-color: #4c4c4c;
	border: 1px solid #606060;
}
.osnap input:checked::after {
	content: "";
	display: block;
	width: 3px;
	height: 5px;
	margin: 0 2px;
	border: solid #fff;
	border-width: 0 1px 1px 0;
	transform: rotate(40deg);
}

/* viewport */
.center {
	flex: 1;
	display: flex;
	flex-direction: column;
	min-width: 0;
}
.viewport {
	position: relative;
	flex: 1;
	margin-top: 1px;
	background-color: #9da3aa;
}
.scene {
	position: absolute;
	width: 100%;
	height: 100%;
}
.axis {
	font-family: "Liberation Sans", sans-serif;
	font-size: 9px;
	fill: #6c7075;
}
.view-label {
	position: absolute;
	top: 0;
	left: 1px;
	display: flex;
	height: 12px;
	background-color: #0a64f5;
	color: #fff;
	font-weight: bold;
}
.view-label button {
	padding: 0 4px 0 5px;
}
.view-label .drop {
	width: 8px;
	padding: 0;
	border-left: 1px solid #6ea4ff;
}
.view-label .drop::after {
	content: "";
	display: block;
	margin: 0 1px;
	border: 3px solid transparent;
	border-top-color: #fff;
	border-bottom: 0;
}
.view-tabs {
	display: flex;
	gap: 10px;
	height: 15px;
	color: #777;
}
.view-tabs .active {
	margin-right: -5px;
	padding: 0 5px 0 7px;
	background-color: #313131;
	border: 1px solid #555;
	border-top: 0;
	border-radius: 0 0 2px 2px;
	color: #e6e6e6;
}
.view-tabs .add {
	color: #fff;
	font-size: 12px;
	font-weight: bold;
}

/* layers */
.right {
	display: flex;
	width: 136px;
	background-color: #313131;
}
.layers-panel {
	display: flex;
	flex-direction: column;
	width: 119px;
	padding: 1px 0 0 1px;
}
.layers-panel h2 {
	height: 14px;
	padding-left: 3px;
	color: #888;
}
.layer-tools {
	display: flex;
	flex-wrap: wrap;
	column-gap: 4px;
	row-gap: 5px;
	padding: 5px 0 5px 4px;
}
.layer-tools svg {
	width: 10px;
	height: 10px;
}
.line {
	fill: none;
	stroke: #999;
}
.search {
	display: flex;
	align-items: center;
	height: 14px;
	padding-left: 3px;
	gap: 1px;
	background-color: #5a5a5a;
	border: 1px solid #666;
	border-radius: 7px;
}
.search svg {
	width: 8px;
	height: 8px;
}
.search input {
	flex: 1;
}
input::placeholder {
	color: #b5b5b5;
	opacity: 1;
}
table {
	width: 118px;
	height: 139px;
	margin-top: 5px;
	table-layout: fixed;
	border-collapse: collapse;
	background-color: #212121;
}
th, td {
	width: 13px;
	padding: 0;
	text-align: left;
	border-right: 1px solid #303030;
}
th {
	height: 16px;
	font-weight: normal;
	border-bottom: 1px solid #303030;
}
td {
	border-right: 0;
	border-bottom: 1px solid #2a2a2a;
}
th.name {
	width: 53px;
	padding-left: 3px;
}
th.mat {
	padding-left: 3px;
}
td:first-child {
	padding-left: 11px;
}
.current {
	font-weight: bold;
	color: #fff;
}
td svg {
	width: 10px;
	height: 10px;
	margin: 0 auto;
}
.on {
	fill: #ffdf2e;
}
.off {
	fill: #6f9fe8;
}
.locked {
	color: #6f9fe8;
}
.swatch, .ring {
	display: block;
	width: 10px;
	height: 10px;
	margin: 0 auto;
	border: 1px solid #999;
}
.ring {
	width: 9px;
	height: 9px;
	border-color: #666;
	border-radius: 50%;
}
.red { background-color: #ff0000; }
.black { background-color: #000; }
.bright { background-color: #0a1eff; }
.white { background-color: #fff; }
.green { background-color: #008000; }
.blue { background-color: #0000ff; }
.purple { background-color: #7a26cc; }
.darkred { background-color: #cc0000; }
.hscroll {
	flex: 1;
	display: flex;
	align-items: flex-end;
	width: 118px;
	padding: 0 0 3px 5px;
	background-color: #212121;
}
.thumb {
	width: 31px;
	height: 5px;
	border-radius: 3px;
	background-color: #7b7b7b;
}
.side-tabs {
	flex: 1;
	display: flex;
	flex-direction: column;
	background-color: #434343;
}
.side-tabs button {
	display: flex;
	align-items: center;
	justify-content: center;
	height: 24px;
}
.side-tabs svg {
	width: 9px;
	height: 9px;
}
.side-tabs .panel-gear {
	height: 13px;
	background-color: #313131;
}
.side-tabs .active {
	background-color: #313131;
}

/* status bar */
.statusbar {
	display: flex;
	align-items: center;
	height: 14px;
	padding: 0 5px;
	background-color: #313131;
	color: #b5b5b5;
	white-space: nowrap;
}
.statusbar svg {
	width: 9px;
	height: 9px;
}
.toggle {
	width: 23px;
}
.cplane {
	width: 54px;
}
.coords {
	width: 121px;
}
.units {
	width: 48px;
}
.layer {
	display: flex;
	align-items: center;
	gap: 5px;
	width: 132px;
}
.layer-color {
	width: 10px;
	height: 10px;
	border: 1px solid #999;
	background-color: #0a1eff;
}
.statusbar button {
	margin-right: 12px;
	text-align: left;
}
.statusbar .ortho {
	margin-right: 8px;
}
.statusbar .record {
	margin-right: 9px;
}
.statusbar .toggle {
	margin: 0;
}
.statusbar .on {
	height: 13px;
	margin: 0 1px 0 0;
	padding: 0 5px;
	background-color: #141414;
	color: #fff;
	font-family: "Open Sans", sans-serif;
	font-weight: bold;
	border-radius: 1px;
}
.auto-lock {
	margin: 0 3px 0 1px;
}
.memory {
	margin-left: 5px;
}
.statusbar .right-toggle {
	width: 9px;
	margin-left: auto;
}

/* windows taskbar */
.taskbar {
	display: flex;
	height: 21px;
	background: linear-gradient(#3f8cf3, #2560dc 15%, #2258d2 85%, #1d4bb8);
}
.start {
	display: flex;
	align-items: center;
	gap: 2px;
	width: 64px;
	padding-left: 6px;
	background: linear-gradient(#6cc266, #35943a 20%, #379e3c 80%, #23702a);
	border-radius: 0 8px 8px 0;
	color: #fff;
	font-family: "Open Sans", sans-serif;
	font-size: 12px;
	font-style: italic;
	font-weight: bold;
}
.task-search {
	display: flex;
	align-items: center;
	width: 171px;
	margin: 1px 0 0 3px;
	padding-left: 8px;
	background-color: #fff;
	color: #333;
}
.task-search svg {
	width: 11px;
	height: 11px;
}
.task-search input {
	flex: 1;
	margin-left: 7px;
	font-family: "Open Sans", sans-serif;
	font-size: 10px;
}
.task-search input::placeholder {
	color: #444;
}
.task-search .eye {
	width: 38px;
	height: 18px;
}
.apps {
	display: flex;
}
.apps button {
	display: flex;
	align-items: center;
	justify-content: center;
	width: 25px;
	padding-top: 1px;
}
.apps svg {
	width: 11px;
	height: 11px;
}
.apps .open {
	border-bottom: 2px solid #1236f2;
}
.apps .active {
	background-color: #a8c0f2;
	border-bottom: 2px solid #1236f2;
}
.divider {
	width: 2px;
	margin: 5px 4px;
	background-color: #173a8c;
}
.tray {
	display: flex;
	align-items: center;
	gap: 5px;
	margin-left: auto;
	padding-right: 15px;
	color: #0a1330;
}
.tray svg {
	width: 11px;
	height: 11px;
}
.ink {
	fill: none;
	stroke: #0a1330;
	stroke-width: 1.2;
}
.charge {
	width: 34px;
	height: 13px;
	margin-right: -2px;
	border: 1px solid #fff;
	background-color: #1a9a4c;
	color: #fff;
	font-size: 9px;
	line-height: 11px;
	text-align: center;
}
.tray .note {
	margin: 0 10px;
}
.tray .copilot {
	width: 14px;
	height: 14px;
}
```
